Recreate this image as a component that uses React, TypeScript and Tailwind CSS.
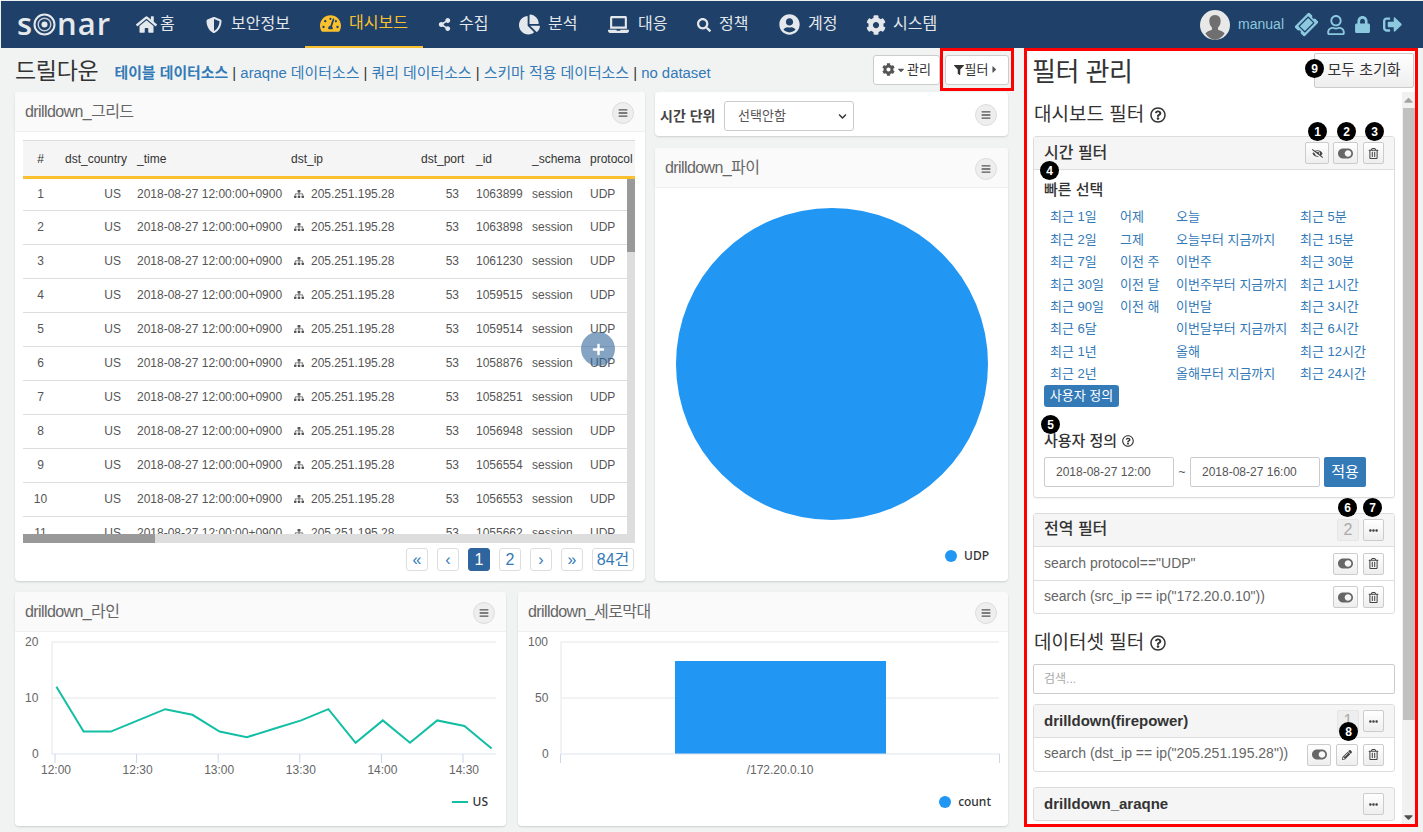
import React from "react";
import {
  FaHome,
  FaShieldAlt,
  FaTachometerAlt,
  FaShareAlt,
  FaChartPie,
  FaLaptop,
  FaSearch,
  FaUserCircle,
  FaCog,
  FaSitemap,
  FaFilter,
  FaRegTrashAlt,
  FaToggleOn,
  FaEyeSlash,
  FaEllipsisH,
  FaPencilAlt,
  FaRegQuestionCircle,
  FaLock,
  FaSignOutAlt,
  FaTicketAlt,
  FaRegUser,
  FaBars,
  FaPlus,
  FaCaretDown,
  FaCaretRight,
  FaCaretUp,
  FaChevronDown,
} from "react-icons/fa";

const navItems = [
  { label: "홈", icon: <FaHome className="text-[21px]" />, box: "w-[99px] pl-[30px]", gap: "gap-[3px]" },
  { label: "보안정보", icon: <FaShieldAlt className="text-[16px]" />, box: "w-[100px] pl-[1px]", gap: "gap-[9px]" },
  { label: "대시보드", icon: <FaTachometerAlt className="text-[21px] text-[#fbc02d]" />, box: "w-[118px] pl-[15px] text-[#fbc02d] border-b-[2px] border-[#fbc02d]", gap: "gap-[8px]" },
  { label: "수집", icon: <FaShareAlt className="text-[13px]" />, box: "w-[82px] pl-[15px]", gap: "gap-[8px]" },
  { label: "분석", icon: <FaChartPie className="text-[21px]" />, box: "w-[89px] pl-[14px]", gap: "gap-[8px]" },
  { label: "대응", icon: <FaLaptop className="text-[21px]" />, box: "w-[89px] pl-[14px]", gap: "gap-[9px]" },
  { label: "정책", icon: <FaSearch className="text-[14px]" />, box: "w-[82px] pl-[14px]", gap: "gap-[8px]" },
  { label: "계정", icon: <FaUserCircle className="text-[21px]" />, box: "w-[88px] pl-[14px]", gap: "gap-[8px]" },
  { label: "시스템", icon: <FaCog className="text-[20px]" />, box: "w-[90px] pl-[13px]", gap: "gap-[7px]" },
];

const rows = [
  ["1", "1063899"],
  ["2", "1063898"],
  ["3", "1061230"],
  ["4", "1059515"],
  ["5", "1059514"],
  ["6", "1058876"],
  ["7", "1058251"],
  ["8", "1056948"],
  ["9", "1056554"],
  ["10", "1056553"],
  ["11", "1055662"],
];

const colGrid = "grid grid-cols-[35px_72px_154px_130px_55px_56px_58px_70px]";

const quickRanges = [
  ["최근 1일", "어제", "오늘", "최근 5분"],
  ["최근 2일", "그제", "오늘부터 지금까지", "최근 15분"],
  ["최근 7일", "이전 주", "이번주", "최근 30분"],
  ["최근 30일", "이전 달", "이번주부터 지금까지", "최근 1시간"],
  ["최근 90일", "이전 해", "이번달", "최근 3시간"],
  ["최근 6달", "", "이번달부터 지금까지", "최근 6시간"],
  ["최근 1년", "", "올해", "최근 12시간"],
  ["최근 2년", "", "올해부터 지금까지", "최근 24시간"],
];

const lineValues = [12, 4, 4, 6, 8, 7, 4, 3, 4.5, 6, 8, 2, 6, 2, 6, 5, 1];

const Logo = () => (
  <div className="flex items-center text-[31px] font-semibold leading-none text-[#e6e9ec] tracking-[1px] font-['Open_Sans',sans-serif] w-[105px] pl-[16px]">
    <span className="-mt-[3px]">s</span>
    <svg width="23" height="23" viewBox="0 0 23 23" className="shrink-0">
      <circle cx="11.5" cy="11.5" r="10" fill="none" stroke="#e6e9ec" strokeWidth="2" />
      <circle cx="11.5" cy="11.5" r="6.3" fill="none" stroke="#c4ccd4" strokeWidth="1.5" />
      <circle cx="11.5" cy="11.5" r="3" fill="#e6e9ec" />
    </svg>
    <span className="-mt-[3px] ml-[1px]">nar</span>
  </div>
);

const Avatar = () => (
  <svg width="30" height="30" viewBox="0 0 30 30" className="shrink-0">
    <circle cx="15" cy="15" r="15" fill="#e8e8e8" />
    <path d="M15 5c-4 0-6 3-5.6 7 .2 2.4 1.2 4.4 2.6 5.6v2.2c-2.6 1-5.4 2-6.6 3.6A15 15 0 0 0 15 30a15 15 0 0 0 9.6-6.6c-1.2-1.6-4-2.6-6.6-3.6v-2.2c1.4-1.2 2.4-3.2 2.6-5.6C21 8 19 5 15 5z" fill="#6f6f6f" />
  </svg>
);

const MenuDot = () => (
  <span className="mt-[2px] w-[22px] h-[22px] rounded-full bg-[#eeeeee] border border-[#dddddd] flex items-center justify-center text-[#555555] text-[10px] shrink-0">
    <FaBars />
  </span>
);

const Card = ({ title, className, children }: { title: string; className: string; children: React.ReactNode }) => (
  <div className={"bg-white rounded-[4px] shadow-[0_1px_2px_rgba(0,0,0,0.15)] flex flex-col overflow-hidden " + className}>
    <div className="h-[40px] shrink-0 bg-[#fafafa] border-b border-[#f0f0f0] flex items-center justify-between pl-[10px] pr-[11px]">
      <span className="text-[16px] text-[#666666] tracking-[-0.6px]">{title}</span>
      <MenuDot />
    </div>
    {children}
  </div>
);

const Badge = ({ n, className }: { n: number; className: string }) => (
  <span className={"absolute z-10 w-[19px] h-[19px] rounded-full bg-black text-white text-[12px] font-bold flex items-center justify-center " + className}>
    {n}
  </span>
);

const ToolBtn = ({ className, children }: { className: string; children: React.ReactNode }) => (
  <span className={"h-[22px] rounded-[2px] border border-[#cccccc] bg-gradient-to-b from-white to-[#eeeeee] flex items-center justify-center text-[#444444] text-[11px] shrink-0 " + className}>
    {children}
  </span>
);

const CountBox = ({ n }: { n: number }) => (
  <span className="w-[22px] h-[22px] rounded-[2px] border border-[#e5e5e5] bg-[#eeeeee] text-[#aaaaaa] text-[16px] flex items-center justify-center shrink-0">
    {n}
  </span>
);

const ToggleIcon = () => <FaToggleOn className="text-[15px] text-[#666666]" />;

const Help = ({ size }: { size: string }) => (
  <FaRegQuestionCircle className={"inline-block text-[#333333] " + size} />
);

const PageBtn = ({ active, className, children }: { active?: boolean; className?: string; children: React.ReactNode }) => (
  <span
    className={
      "h-[23px] rounded-[3px] border flex items-center justify-center text-[16px] " +
      (active ? "bg-[#2f659f] border-[#2f659f] text-white " : "bg-white border-[#dddddd] text-[#337ab7] ") +
      (className ?? "w-[22px]")
    }
  >
    {children}
  </span>
);

const LineChart = () => {
  const pts = lineValues.map((v, i) => `${41.4 + i * 27.2},${122 - v * 5.6}`).join(" ");
  const ticks = ["12:00", "12:30", "13:00", "13:30", "14:00", "14:30"];
  return (
    <svg width="491" height="154" viewBox="0 0 491 154" className="block shrink-0">
      {[10, 66].map((y) => (
        <line key={y} x1="37" x2="481" y1={y} y2={y} stroke="#e6e6e6" />
      ))}
      <line x1="37" x2="37" y1="10" y2="122" stroke="#e6e6e6" />
      <line x1="37" x2="481" y1="122" y2="122" stroke="#dde3ee" />
      <text x="10" y="14" fontSize="12" fill="#666666">20</text>
      <text x="10" y="70" fontSize="12" fill="#666666">10</text>
      <text x="17" y="126" fontSize="12" fill="#666666">0</text>
      {ticks.map((label, t) => (
        <g key={label}>
          <line x1={40 + t * 81.6} x2={40 + t * 81.6} y1="122" y2="131" stroke="#ccd6eb" />
          <text x={41 + t * 81.6} y="142" fontSize="12" fill="#666666" textAnchor="middle">
            {label}
          </text>
        </g>
      ))}
      <polyline points={pts} fill="none" stroke="#13bfa4" strokeWidth="2" />
    </svg>
  );
};

const BarChart = () => (
  <svg width="490" height="154" viewBox="0 0 490 154" className="block shrink-0">
    {[10, 66].map((y) => (
      <line key={y} x1="43" x2="481" y1={y} y2={y} stroke="#e6e6e6" />
    ))}
    <line x1="43" x2="43" y1="10" y2="122" stroke="#e6e6e6" />
    <rect x="157" y="29" width="211" height="93" fill="#2196f3" />
    <line x1="43" x2="482" y1="122" y2="122" stroke="#dde3ee" />
    <line x1="42.5" x2="42.5" y1="122" y2="131" stroke="#ccd6eb" />
    <line x1="481.5" x2="481.5" y1="122" y2="131" stroke="#ccd6eb" />
    <text x="10" y="14" fontSize="12" fill="#666666">100</text>
    <text x="17" y="70" fontSize="12" fill="#666666">50</text>
    <text x="24" y="126" fontSize="12" fill="#666666">0</text>
    <text x="262" y="142" fontSize="12" fill="#666666" textAnchor="middle">/172.20.0.10</text>
  </svg>
);

const App = () => {
  return (
    <div className="w-[1423px] h-[832px] overflow-hidden bg-[#f1f3f3] text-[#333333] font-['Liberation_Sans','Noto_Sans_CJK_KR',sans-serif]">
      {/* top nav */}
      <div className="h-[48px] bg-[#1f4068] flex items-stretch text-[#e4e8ec] text-[16px] border-t border-l border-[#eef0f2]">
        <Logo />
        <div className="flex">
          {navItems.map((item) => (
            <div key={item.label} className={"flex items-center whitespace-nowrap " + item.gap + " " + item.box}>
              {item.icon}
              <span className="-mt-[1px]">{item.label}</span>
            </div>
          ))}
        </div>
        <div className="ml-auto flex items-center pr-[21px] text-[#8cc8de]">
          <Avatar />
          <span className="ml-[8px] text-[14px]">manual</span>
          <FaTicketAlt className="ml-[12px] text-[21px] -rotate-45" />
          <FaRegUser className="ml-[9px] text-[20px]" />
          <FaLock className="ml-[8px] text-[17px]" />
          <FaSignOutAlt className="ml-[12px] text-[19px]" />
        </div>
      </div>

      <div className="flex h-[784px]">
        {/* left dashboard */}
        <div className="w-[1024px] pl-[15px] pr-[15px] flex flex-col">
          <div className="h-[43px] mb-[1px] flex items-center justify-between shrink-0">
            <div className="flex items-center mt-[3px]">
              <span className="text-[23px] tracking-[-0.3px] text-[#333333]">드릴다운</span>
              <div className="ml-[16px] text-[14.9px] text-[#337ab7] whitespace-nowrap mt-[4px]">
                <span className="font-bold">테이블 데이터소스</span>
                <span className="text-[#333333]"> | </span>araqne 데이터소스
                <span className="text-[#333333]"> | </span>쿼리 데이터소스
                <span className="text-[#333333]"> | </span>스키마 적용 데이터소스
                <span className="text-[#333333]"> | </span>no dataset
              </div>
            </div>
            <div className="flex items-center -mr-[5px]">
              <span className="w-[67px] h-[30px] bg-white border border-[#cccccc] rounded-[3px] flex items-center justify-center gap-[1px] text-[13px] text-[#333333]">
                <FaCog className="text-[#555555]" />
                <FaCaretDown className="text-[10px] text-[#555555]" />
                관리
              </span>
              <span className="w-[74px] h-[43px] border-[3px] border-[#ff0000] flex items-center justify-center">
                <span className="w-[64px] h-[30px] bg-white border border-[#cccccc] rounded-[3px] flex items-center justify-center gap-[1px] text-[13px] text-[#333333]">
                  <FaFilter className="text-[10px] text-[#333333]" />
                  필터
                  <FaCaretRight className="text-[11px] text-[#555555]" />
                </span>
              </span>
            </div>
          </div>

          <div className="flex gap-[10px] h-[489px] shrink-0">
            <Card title="drilldown_그리드" className="w-[630px] h-full">
              <div className="relative mx-[8px] mt-[8px] w-[612px] h-[403px] border-t border-[#dddddd] overflow-hidden">
                <div className={colGrid + " h-[38px] bg-[#f5f5f5] border-b-[3px] border-[#fbc02d] text-[12px] text-[#333333] items-center"}>
                  <span className="text-center">#</span>
                  <span className="pl-[7px]">dst_country</span>
                  <span className="pl-[7px]">_time</span>
                  <span className="pl-[7px]">dst_ip</span>
                  <span className="pl-[7px]">dst_port</span>
                  <span className="pl-[7px]">_id</span>
                  <span className="pl-[7px]">_schema</span>
                  <span className="pl-[7px] whitespace-nowrap">protocol</span>
                </div>
                <div className="flex flex-row h-[355px]">
                  <div className="w-[604px] overflow-hidden text-[12px] text-[#555555]">
                    {rows.map(([n, id], i) => (
                      <div key={n} className={colGrid + " pb-[2px] border-b border-[#dddddd] items-center " + (i === 0 ? "h-[32px]" : "h-[34px]")}>
                        <span className="text-center">{n}</span>
                        <span className="text-right pr-[9px]">US</span>
                        <span className="pl-[7px] whitespace-nowrap">2018-08-27 12:00:00+0900</span>
                        <span className="pl-[10px] whitespace-nowrap flex items-center gap-[7px]">
                          <FaSitemap className="text-[10px] text-[#555555]" />
                          205.251.195.28
                        </span>
                        <span className="text-right pr-[10px]">53</span>
                        <span className="pl-[7px]">{id}</span>
                        <span className="pl-[7px]">session</span>
                        <span className="pl-[7px]">UDP</span>
                      </div>
                    ))}
                  </div>
                  <div className="w-[8px] h-full bg-[#dddddd]">
                    <div className="h-[73px] bg-[#999999]" />
                  </div>
                </div>
                <div className="h-[9px] bg-[#dddddd]">
                  <div className="w-[132px] h-full bg-[#999999]" />
                </div>
                <span className="absolute left-[558px] top-[191px] w-[34px] h-[34px] rounded-full bg-[#336699]/60 text-white flex items-center justify-center text-[13px]">
                  <FaPlus />
                </span>
              </div>
              <div className="flex justify-end gap-[9px] mt-[5px] pr-[11px]">
                <PageBtn>«</PageBtn>
                <PageBtn>‹</PageBtn>
                <PageBtn active>1</PageBtn>
                <PageBtn>2</PageBtn>
                <PageBtn>›</PageBtn>
                <PageBtn>»</PageBtn>
                <PageBtn className="w-[42px]">84건</PageBtn>
              </div>
            </Card>

            <div className="w-[353px] flex flex-col gap-[12px]">
              <div className="h-[44px] bg-white rounded-[4px] shadow-[0_1px_2px_rgba(0,0,0,0.15)] flex items-center pl-[5px] pr-[11px] shrink-0">
                <span className="mt-[4px] text-[14px] font-bold text-[#444444] w-[64px] whitespace-nowrap">시간 단위</span>
                <span className="mt-[4px] w-[130px] h-[30px] border border-[#cccccc] rounded-[3px] flex items-center justify-between pl-[13px] pr-[6px] text-[13px] text-[#555555]">
                  선택안함
                  <FaChevronDown className="text-[9px] text-[#333333]" />
                </span>
                <span className="ml-auto"><MenuDot /></span>
              </div>
              <Card title="drilldown_파이" className="flex-1">
                <div className="flex flex-col flex-1 items-center">
                  <svg width="312" height="312" viewBox="0 0 312 312" className="mt-[20px] block shrink-0">
                    <circle cx="156" cy="156" r="156" fill="#2196f3" />
                  </svg>
                  <div className="self-end pr-[19px] mt-[27px] flex items-center gap-[7px] text-[12px] font-medium font-['Noto_Sans',sans-serif] text-[#333333]">
                    <span className="w-[12px] h-[12px] rounded-full bg-[#2196f3]" />
                    UDP
                  </div>
                </div>
              </Card>
            </div>
          </div>

          <div className="flex gap-[12px] h-[234px] mt-[11px] shrink-0">
            <Card title="drilldown_라인" className="w-[491px] h-full">
              <LineChart />
              <div className="self-end pr-[18px] mt-[7px] flex items-center gap-[5px] text-[12px] font-medium font-['Noto_Sans',sans-serif] text-[#333333]">
                <span className="w-[16px] h-[2px] bg-[#13bfa4]" />
                US
              </div>
            </Card>
            <Card title="drilldown_세로막대" className="w-[490px] h-full">
              <BarChart />
              <div className="self-end pr-[17px] mt-[7px] flex items-center gap-[7px] text-[12px] font-medium font-['Noto_Sans',sans-serif] text-[#333333]">
                <span className="w-[12px] h-[12px] rounded-full bg-[#2196f3]" />
                count
              </div>
            </Card>
          </div>
        </div>

        {/* filter panel */}
        <div className="w-[394px] h-[779px] border-[3px] border-[#ff0000] bg-white flex flex-col shrink-0">
          <div className="h-[41px] shrink-0 flex items-center justify-between pl-[5px] pr-[1px] relative">
            <span className="text-[26px] text-[#333333] tracking-[-0.5px] mt-[2px]">필터 관리</span>
            <span className="w-[100px] h-[35px] -mt-[3px] border border-[#cccccc] rounded-[2px] bg-gradient-to-b from-white to-[#eeeeee] text-[15px] flex items-center justify-center text-[#333333]">
              모두 초기화
            </span>
            <Badge n={9} className="left-[278px] top-[8px]" />
          </div>
          <div className="flex flex-1 min-h-0">
            <div className="w-[375px] pl-[6px] pr-[7px] overflow-hidden relative">
              <div className="h-[44px] pt-[2px] pl-[1px] flex items-center gap-[6px] text-[19px] text-[#333333]">
                대시보드 필터 <Help size="text-[16px]" />
              </div>

              <div className="relative h-[362px] border border-[#dddddd] rounded-[3px] shadow-[0_1px_1px_rgba(0,0,0,0.05)]">
                <div className="h-[33px] bg-[#f5f5f5] border-b border-[#dddddd] flex items-center pl-[10px] pr-[10px] text-[16px] font-medium text-[#333333]">
                  <span className="mr-auto">시간 필터</span>
                  <ToolBtn className="w-[24px]"><FaEyeSlash /></ToolBtn>
                  <ToolBtn className="w-[25px] ml-[4px]"><ToggleIcon /></ToolBtn>
                  <ToolBtn className="w-[21px] ml-[5px]"><FaRegTrashAlt /></ToolBtn>
                </div>
                <Badge n={1} className="left-[274px] -top-[15px]" />
                <Badge n={2} className="left-[303px] -top-[15px]" />
                <Badge n={3} className="left-[331px] -top-[15px]" />
                <Badge n={4} className="left-[6px] top-[24px]" />
                <Badge n={5} className="left-[7px] top-[278px]" />
                <div className="pl-[10px]">
                  <div className="text-[15px] font-medium text-[#333333] mt-[9px] h-[20px]">빠른 선택</div>
                  <div className="mt-[7px] ml-[6px] grid grid-cols-[70px_56px_124px_80px] auto-rows-[22.4px] items-center text-[13px] text-[#337ab7] whitespace-nowrap">
                    {quickRanges.map((row) =>
                      row.map((label, i) => <span key={row[0] + i}>{label}</span>),
                    )}
                  </div>
                  <span className="w-[75px] h-[22px] bg-[#337ab7] rounded-[3px] text-white text-[13px] flex items-center justify-center">
                    사용자 정의
                  </span>
                  <div className="mt-[24px] text-[15px] font-medium text-[#333333] flex items-center gap-[5px] h-[20px]">
                    사용자 정의 <Help size="text-[12px] font-normal" />
                  </div>
                  <div className="mt-[6px] flex items-center text-[12px] text-[#555555]">
                    <span className="w-[130px] h-[30px] border border-[#cccccc] rounded-[2px] pl-[11px] flex items-center">2018-08-27 12:00</span>
                    <span className="w-[16px] text-center">~</span>
                    <span className="w-[130px] h-[30px] border border-[#cccccc] rounded-[2px] pl-[11px] flex items-center">2018-08-27 16:00</span>
                    <span className="ml-[4px] w-[42px] h-[30px] bg-[#337ab7] rounded-[2px] text-white text-[15px] flex items-center justify-center">적용</span>
                  </div>
                </div>
              </div>

              <div className="relative h-[101px] mt-[15px] border border-[#dddddd] rounded-[3px] text-[14px] text-[#666666]">
                <div className="h-[33px] bg-[#f5f5f5] border-b border-[#dddddd] flex items-center pl-[10px] pr-[10px]">
                  <span className="mr-auto -mt-[2px] text-[16px] font-medium text-[#333333]">전역 필터</span>
                  <CountBox n={2} />
                  <ToolBtn className="w-[21px] ml-[4px]"><FaEllipsisH className="text-[9px]" /></ToolBtn>
                </div>
                <Badge n={6} className="left-[304px] -top-[16px]" />
                <Badge n={7} className="left-[329px] -top-[16px]" />
                <div className="h-[34px] border-b border-[#dddddd] flex items-center pl-[10px] pr-[10px]">
                  <span className="mr-auto -mt-[1px]">search protocol=="UDP"</span>
                  <ToolBtn className="w-[25px]"><ToggleIcon /></ToolBtn>
                  <ToolBtn className="w-[21px] ml-[5px]"><FaRegTrashAlt /></ToolBtn>
                </div>
                <div className="h-[32px] flex items-center pl-[10px] pr-[10px]">
                  <span className="mr-auto -mt-[1px]">search (src_ip == ip("172.20.0.10"))</span>
                  <ToolBtn className="w-[25px]"><ToggleIcon /></ToolBtn>
                  <ToolBtn className="w-[21px] ml-[5px]"><FaRegTrashAlt /></ToolBtn>
                </div>
              </div>

              <div className="mt-[15px] pl-[1px] h-[28px] flex items-center gap-[6px] text-[19px] text-[#333333]">
                데이터셋 필터 <Help size="text-[16px]" />
              </div>
              <div className="mt-[7px] h-[30px] border border-[#cccccc] rounded-[2px] pl-[10px] flex items-center text-[12px] text-[#aaaaaa]">
                검색...
              </div>

              <div className="relative h-[68px] mt-[10px] border border-[#dddddd] rounded-[3px] text-[14px] text-[#666666]">
                <div className="h-[33px] bg-[#f5f5f5] border-b border-[#dddddd] flex items-center pl-[10px] pr-[10px]">
                  <span className="mr-auto text-[15px] font-bold text-[#333333]">drilldown(firepower)</span>
                  <CountBox n={1} />
                  <ToolBtn className="w-[21px] ml-[4px]"><FaEllipsisH className="text-[9px]" /></ToolBtn>
                </div>
                <Badge n={8} className="left-[305px] top-[17px]" />
                <div className="h-[33px] flex items-center pl-[10px] pr-[10px]">
                  <span className="mr-auto -mt-[3px]">search (dst_ip == ip("205.251.195.28"))</span>
                  <ToolBtn className="w-[24px]"><ToggleIcon /></ToolBtn>
                  <ToolBtn className="w-[22px] ml-[5px]"><FaPencilAlt className="text-[10px]" /></ToolBtn>
                  <ToolBtn className="w-[21px] ml-[5px]"><FaRegTrashAlt /></ToolBtn>
                </div>
              </div>

              <div className="h-[34px] mt-[15px] border border-[#dddddd] rounded-[3px] bg-[#f5f5f5] flex items-center pl-[10px] pr-[10px]">
                <span className="mr-auto text-[15px] font-bold text-[#333333]">drilldown_araqne</span>
                <ToolBtn className="w-[21px]"><FaEllipsisH className="text-[9px]" /></ToolBtn>
              </div>
            </div>
            <div className="w-[13px] bg-[#f1f1f1] flex flex-col items-center text-[9px] text-[#a3a3a3]">
              <FaCaretUp className="h-[16px] shrink-0" />
              <div className="w-[12px] h-[612px] bg-[#c1c1c1] shrink-0" />
              <FaCaretDown className="mt-auto h-[14px] text-[#505050] shrink-0" />
            </div>
          </div>
        </div>
      </div>
    </div>
  );
};

export default App;
